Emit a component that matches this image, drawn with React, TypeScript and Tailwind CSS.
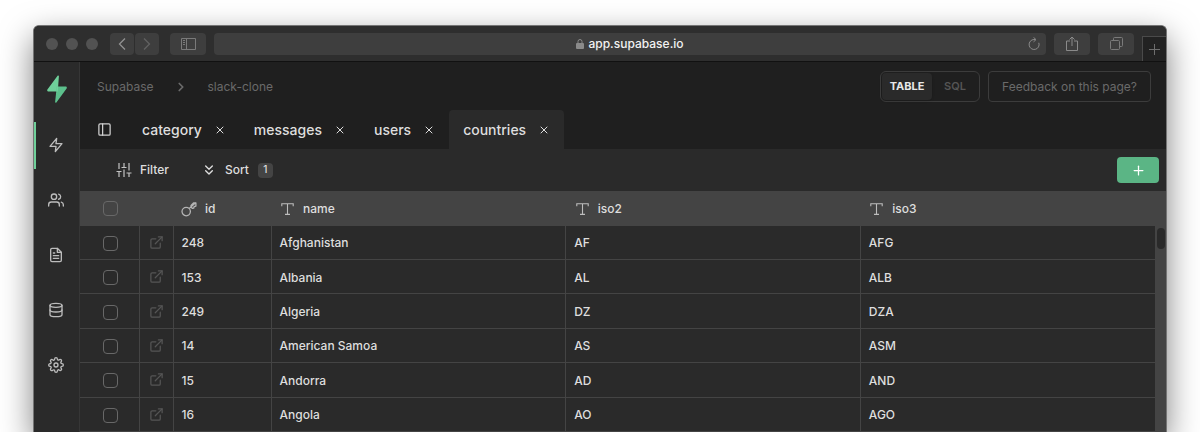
import { FiZap, FiUsers, FiFileText, FiDatabase, FiSettings, FiChevronRight, FiChevronsDown, FiExternalLink, FiPlus, FiX, FiSidebar } from "react-icons/fi";

const navItems = [
  { label: "Home", Icon: FiZap, active: true },
  { label: "Users", Icon: FiUsers, active: false },
  { label: "Docs", Icon: FiFileText, active: false },
  { label: "Database", Icon: FiDatabase, active: false },
  { label: "Settings", Icon: FiSettings, active: false },
];

const tabs = [
  { name: "category", active: false },
  { name: "messages", active: false },
  { name: "users", active: false },
  { name: "countries", active: true },
];

const countries = [
  { id: 248, name: "Afghanistan", iso2: "AF", iso3: "AFG" },
  { id: 153, name: "Albania", iso2: "AL", iso3: "ALB" },
  { id: 249, name: "Algeria", iso2: "DZ", iso3: "DZA" },
  { id: 14, name: "American Samoa", iso2: "AS", iso3: "ASM" },
  { id: 15, name: "Andorra", iso2: "AD", iso3: "AND" },
  { id: 16, name: "Angola", iso2: "AO", iso3: "AGO" },
];

function TypeIcon() {
  return (
    <svg viewBox="0 0 13 12" className="h-3 w-[13px] shrink-0" fill="none" stroke="#bdbdbd" strokeWidth="1.1" aria-hidden="true">
      <path d="M.8 3.200V.8h11.400v2.400M6.500.8v10.400M4 11.400h5" />
    </svg>
  );
}

function KeyIcon() {
  return (
    <svg viewBox="0 0 16 16" className="size-4 shrink-0" fill="none" stroke="#b4b4b4" strokeWidth="1.3" strokeLinejoin="round" aria-hidden="true">
      <circle cx="5.200" cy="10.600" r="4.200" />
      <path d="M8.200 7.600 14.800 1.500M10 5.900l1.200 1.500 1.600-.4.300-1.300 1.800-.6V1.800L12.500 2 10 4.400Z" />
    </svg>
  );
}

function SlidersIcon() {
  return (
    <svg viewBox="0 0 16 14" className="h-[14px] w-4" fill="none" stroke="#c4c4c4" strokeWidth="1.2" aria-hidden="true">
      <path d="M3 0v6M3 8.500V14M.5 8.500h5M8 0v4.500M8 6.500V14M5.500 4.500h5M13 0v7.500M13 10V14M10.500 10h5" />
    </svg>
  );
}

function Logo() {
  return (
    <svg viewBox="0 0 20 28" className="h-7 w-5" aria-hidden="true">
      <path d="M11.900 1.200c.1-.8-.8-1.100-1.300-.5L.4 14.600c-.6.900 0 2 1 2h9.400Z" fill="#6fd09a" />
      <path d="M8.100 26.900c-.1.800.8 1.100 1.300.5l10.200-13.900c.6-.9 0-2-1-2H9.800Z" fill="#5cc08c" />
      <path d="M11.200 11.500H9.900l-.5 5.100h1.400Z" fill="#6fd09a" />
    </svg>
  );
}

function Check({ label }: { label: string }) {
  return (
    <input
      type="checkbox"
      aria-label={label}
      className="block size-[15px] appearance-none rounded border border-[#686868] bg-transparent"
    />
  );
}

function TitleBar() {
  return (
    <header className="flex h-9 items-center border-b border-[#111] bg-[#2e2e2e] pl-3">
      <div className="flex gap-2">
        <span className="size-3 rounded-full bg-[#525252]" />
        <span className="size-3 rounded-full bg-[#525252]" />
        <span className="size-3 rounded-full bg-[#525252]" />
      </div>
      <div className="ml-3 flex gap-px">
        <button aria-label="Back" className="grid h-[22px] w-6 place-items-center rounded bg-[#3e3e3e] text-[#929292]">
          <svg viewBox="0 0 8 12" className="h-3 w-2" fill="none" stroke="currentColor" strokeWidth="1.3"><path d="M7 .5 1.500 6 7 11.500" /></svg>
        </button>
        <button aria-label="Forward" className="grid h-[22px] w-6 place-items-center rounded bg-[#3e3e3e] text-[#626262]">
          <svg viewBox="0 0 8 12" className="h-3 w-2" fill="none" stroke="currentColor" strokeWidth="1.3"><path d="M1 .5 6.500 6 1 11.500" /></svg>
        </button>
      </div>
      <button aria-label="Show sidebar" className="ml-[11px] grid h-[22px] w-9 place-items-center rounded bg-[#3e3e3e] text-[#7a7a7a]">
        <svg viewBox="0 0 15 12" className="h-3 w-[15px]" fill="none" stroke="currentColor"><path d="M.5.5h14v11H.5ZM5.500.5v11M2 2.500h2M2 4.500h2M2 6.500h2" /></svg>
      </button>
      <div className="ml-2 flex h-[22px] min-w-0 flex-1 items-center rounded bg-[#3e3e3e] px-[6px] text-[#8a8a8a]">
        <span className="w-3" />
        <span className="flex flex-1 items-center justify-center gap-1">
          <svg viewBox="0 0 8 10" className="h-[10px] w-2" aria-hidden="true">
            <rect y="4" width="8" height="6" rx="1" fill="#8a8a8a" />
            <path d="M2 4.500V2.500a2 2 0 0 1 4 0v2" fill="none" stroke="#8a8a8a" />
          </svg>
          <span className="text-xs font-medium text-[#f2f2f2]">app.supabase.io</span>
        </span>
        <button aria-label="Reload">
          <svg viewBox="0 0 12 13" className="h-[13px] w-3" fill="none" stroke="currentColor"><path d="M10.800 5.800A5 5 0 1 1 6 2.500h1.500M5.500.3 8 2.600 5.500 4.900" /></svg>
        </button>
      </div>
      <button aria-label="Share" className="ml-2 grid h-[22px] w-9 place-items-center rounded bg-[#3e3e3e] text-[#8a8a8a]">
        <svg viewBox="0 0 12 15" className="h-[15px] w-3" fill="none" stroke="currentColor"><path d="M4 5H.5v9.500h11V5H8M6 10V1M3.500 3.500 6 1l2.500 2.500" /></svg>
      </button>
      <button aria-label="Show tabs" className="ml-2 grid h-[22px] w-9 place-items-center rounded bg-[#3e3e3e] text-[#7a7a7a]">
        <svg viewBox="0 0 13 13" className="size-[13px]" fill="none" stroke="currentColor"><rect x=".5" y="3.500" width="9" height="9" rx="1" /><path d="M3.500 3.500v-2a1 1 0 0 1 1-1h7a1 1 0 0 1 1 1v7a1 1 0 0 1-1 1h-2" /></svg>
      </button>
      <button aria-label="New tab" className="ml-2 grid h-[25px] w-6 place-items-center self-end border-t border-l border-[#4a4a4a] bg-[#222] text-[#6e6e6e]">
        <svg viewBox="0 0 11 11" className="size-[11px]" stroke="currentColor"><path d="M5.500 0v11M0 5.500h11" /></svg>
      </button>
    </header>
  );
}

function Sidebar() {
  return (
    <nav aria-label="Main" className="flex w-[46px] shrink-0 flex-col border-r border-[#363636] bg-[#2a2a2a]">
      <a href="#home" aria-label="Supabase" className="flex h-[60px] items-center justify-center pb-1.5">
        <Logo />
      </a>
      {navItems.map(({ label, Icon, active }) => (
        <a
          key={label}
          href={"#" + label.toLowerCase()}
          aria-label={label}
          className={
            active
              ? "mb-2 flex h-[47px] items-center justify-center border-l-2 border-[#6fd09a] pr-[3px] pb-px text-[#bcbcbc]"
              : "mb-2 flex h-[47px] items-center justify-center pr-px pb-px text-[#bcbcbc]"
          }
        >
          <Icon size={16} strokeWidth={2} />
        </a>
      ))}
    </nav>
  );
}

function TopBar() {
  return (
    <div className="flex h-12 items-center pt-px pr-[15px] pl-[17px] text-xs text-[#6a6a6a]">
      <a href="#supabase">Supabase</a>
      <FiChevronRight size={14} strokeWidth={3} className="mx-5" />
      <a href="#slack-clone">slack-clone</a>
      <div className="ml-auto flex h-[31px] rounded-md border border-[#3c3c3c] p-px text-[11px]">
        <button className="w-[50px] rounded bg-[#2a2a2a] font-bold text-[#e8e8e8] shadow">TABLE</button>
        <button className="w-[46px] font-semibold text-[#555]">SQL</button>
      </div>
      <button className="ml-2 h-[31px] rounded border border-[#3c3c3c] px-[13px]">Feedback on this page?</button>
    </div>
  );
}

function TabBar() {
  return (
    <div className="flex h-[39px] items-stretch">
      <button aria-label="Toggle panel" className="grid w-12 place-items-center text-[#d0d0d0]">
        <FiSidebar size={15} strokeWidth={2} />
      </button>
      {tabs.map((tab) => (
        <div
          key={tab.name}
          className={
            tab.active
              ? "flex items-center gap-3 rounded-t bg-[#2a2a2a] px-[14px] text-[#dedede]"
              : "flex items-center gap-3 px-[14px] text-[#dedede]"
          }
        >
          <button className="text-sm font-medium">{tab.name}</button>
          <button aria-label={"Close " + tab.name}>
            <FiX size={12} />
          </button>
        </div>
      ))}
    </div>
  );
}

function Toolbar() {
  return (
    <div className="flex h-[42px] items-center bg-[#2a2a2a] pr-[7px] pl-9 text-xs font-medium text-[#dedede]">
      <button className="flex items-center gap-2">
        <SlidersIcon />
        Filter
      </button>
      <button className="ml-8 flex items-center gap-2">
        <FiChevronsDown size={16} />
        Sort
        <span className="ml-px grid h-[15px] w-[15px] place-items-center rounded-sm bg-[#444] text-[10px]">1</span>
      </button>
      <button aria-label="Add row" className="ml-auto grid h-[26px] w-[42px] place-items-center rounded bg-[#5bb585] text-white">
        <FiPlus size={15} />
      </button>
    </div>
  );
}

function DataTable() {
  return (
    <div className="flex bg-[#444]">
      <div className="min-w-0 flex-1">
        <table className="h-[241px] w-full table-fixed border-collapse text-left text-xs font-medium text-[#dedede]">
          <colgroup>
            <col className="w-[59px]" />
            <col className="w-[34px]" />
            <col className="w-[98px]" />
            <col />
            <col />
            <col />
          </colgroup>
          <thead>
            <tr className="h-[35px]">
              <th className="pl-[23px]"><Check label="Select all rows" /></th>
              <th aria-label="Open" />
              <th className="pl-2 font-medium"><span className="flex items-center gap-2"><KeyIcon />id</span></th>
              <th className="pl-[10px] font-medium"><span className="flex items-center gap-[9px]"><TypeIcon />name</span></th>
              <th className="pl-[10px] font-medium"><span className="flex items-center gap-[9px]"><TypeIcon />iso2</span></th>
              <th className="pl-[10px] font-medium"><span className="flex items-center gap-[9px]"><TypeIcon />iso3</span></th>
            </tr>
          </thead>
          <tbody className="bg-[#2a2a2a]">
            {countries.map((row) => (
              <tr key={row.id} className="border-b border-[#444]">
                <td className="border-r border-[#444] pt-0.5 pl-[23px]"><Check label={"Select " + row.name} /></td>
                <td className="border-r border-[#444] pl-[9px]">
                  <a href={"#row-" + row.id} aria-label={"Open " + row.name} className="block text-[#555]"><FiExternalLink size={15} /></a>
                </td>
                <td className="border-r border-[#444] pt-0.5 pl-2">{row.id}</td>
                <td className="border-r border-[#444] pt-0.5 pl-2">{row.name}</td>
                <td className="border-r border-[#444] pt-0.5 pl-2">{row.iso2}</td>
                <td className="pt-0.5 pl-2">{row.iso3}</td>
              </tr>
            ))}
          </tbody>
        </table>
      </div>
      <div className="flex w-[11px] justify-center pt-[37px]">
        <span className="h-[21px] w-2 rounded-full bg-[#2a2a2a]" />
      </div>
    </div>
  );
}

export default function App() {
  return (
    <div className="h-screen overflow-hidden bg-white px-[33px] pt-[25px] font-['Inter','Liberation_Sans',sans-serif]">
      <div className="overflow-hidden rounded-t-md border border-b-0 border-[#757575] bg-[#1f1f1f] shadow-[0_12px_32px_rgba(0,0,0,0.5)]">
        <TitleBar />
        <div className="flex">
          <Sidebar />
          <main className="min-w-0 flex-1">
            <TopBar />
            <TabBar />
            <Toolbar />
            <DataTable />
          </main>
        </div>
      </div>
    </div>
  );
}
